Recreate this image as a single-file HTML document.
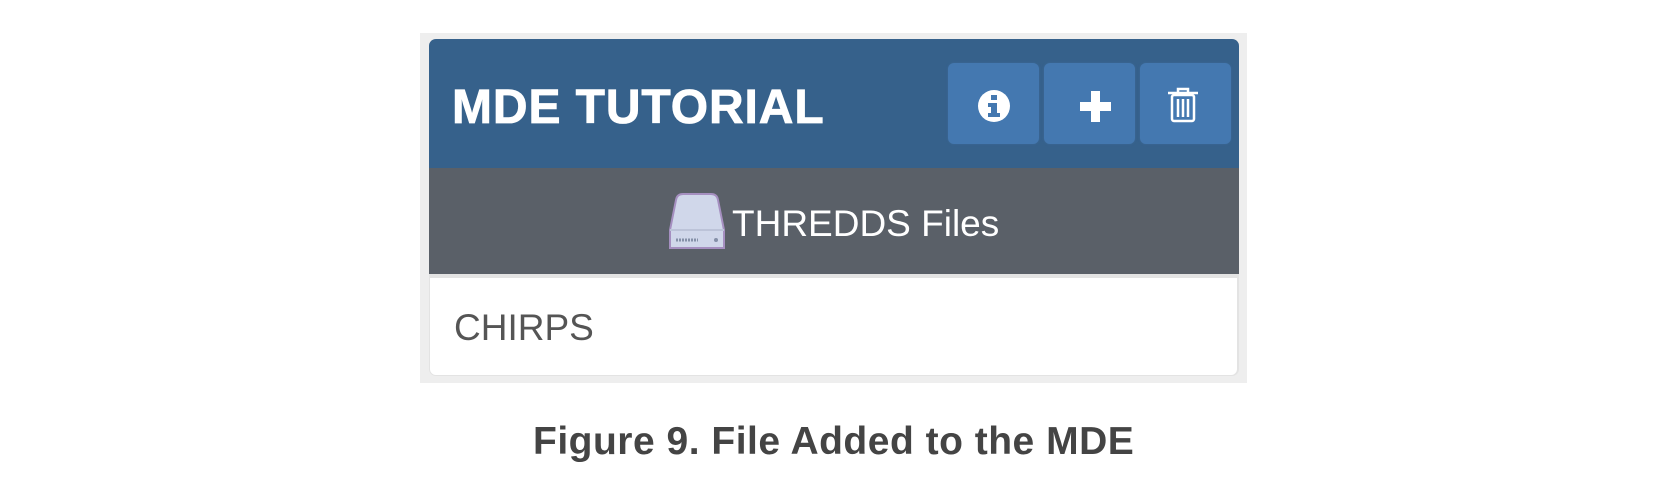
<!DOCTYPE html>
<html><head><style>
body{margin:0;width:1664px;height:484px;background:#fff;position:relative;overflow:hidden;font-family:"Liberation Sans",Arial,sans-serif}
.outer{position:absolute;left:420px;top:33px;width:827px;height:350px;background:#eeeeee}
.panel{position:absolute;left:429px;top:39px;width:810px;height:337px;border-radius:7px;overflow:hidden;background:#e3e3e3}
.hdr{position:absolute;left:0;top:0;width:810px;height:129px;background:#36618b}
.title{position:absolute;left:23px;top:42px;color:#fff;font-weight:bold;font-size:48px;line-height:54px;letter-spacing:0.9px;-webkit-text-stroke:0.8px #fff}
.btn{position:absolute;top:24px;width:91px;height:81px;background:#4478b0;border-radius:6px;box-shadow:0 0 2px #3d6a9a}
.gray{position:absolute;left:0;top:129px;width:810px;height:106px;background:#5a6068}
.gt{position:absolute;left:303px;top:165px;color:#fff;font-size:37px;line-height:40px}
.body{position:absolute;left:1px;top:239px;width:807px;height:97px;background:#fff;border-radius:0 0 6px 6px}
.chirps{position:absolute;left:24px;top:30px;font-size:37px;color:#555;line-height:40px}
.cap{position:absolute;left:533px;top:420px;font-size:39px;font-weight:bold;color:#444;line-height:44px;letter-spacing:0.5px}
</style></head><body>
<div class="outer"></div>
<div class="panel">
 <div class="hdr">
  <div class="title">MDE TUTORIAL</div>
  <div class="btn" style="left:519px"><svg width="91" height="81"><circle cx="46" cy="43" r="16" fill="#fff"/><rect x="43" y="32" width="6" height="5" fill="#4478b0"/><path d="M40 40h9v10h3v4h-12v-4h3v-6h-3z" fill="#4478b0"/></svg></div>
  <div class="btn" style="left:615px"><svg width="91" height="81"><rect x="36" y="39" width="31" height="9" fill="#fff"/><rect x="47" y="28" width="9" height="31" fill="#fff"/></svg></div>
  <div class="btn" style="left:711px"><svg width="91" height="81"><g stroke="#fff" stroke-width="2.5" fill="none"><path d="M28 30h30M38 30v-4h10v4"/><rect x="32" y="32" width="22" height="26" rx="2"/><path d="M38 36v18M43 36v18M48 36v18"/></g></svg></div>
 </div>
 <div class="gray">
  <svg style="position:absolute;left:239px;top:24px" width="58" height="60"><path d="M8 8q1-6 7-6h28q6 0 7 6l6 30v18h-54v-18z" fill="#d0d7ea" stroke="#a58fc0" stroke-width="2"/><path d="M2 38h54" stroke="#bcc3d8" stroke-width="2"/><path d="M8 48h22" stroke="#8590a8" stroke-width="3" stroke-dasharray="2 1"/><circle cx="48" cy="48" r="2" fill="#8590a8"/></svg>
 </div>
 <div class="gt">THREDDS Files</div>
 <div class="body"><div class="chirps">CHIRPS</div></div>
</div>
<div class="cap">Figure 9. File Added to the MDE</div>
</body></html>
